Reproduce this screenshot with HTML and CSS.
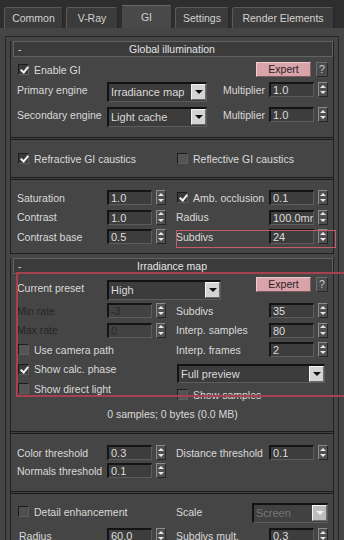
FILE: index.html
```html
<!DOCTYPE html>
<html lang="en">
<head>
    <meta charset="UTF-8" />
    <meta name="viewport" content="width=device-width, initial-scale=1.0" />
    <title>V-Ray - GI</title>
    <link rel="stylesheet" href="styles.css">
</head>
<body>
    <!-- Render setup tabs -->
    <div class="tabs">
        <div class="tab tab-common">Common</div>
        <div class="tab tab-vray">V-Ray</div>
        <div class="tab tab-gi active">GI</div>
        <div class="tab tab-settings">Settings</div>
        <div class="tab tab-elements">Render Elements</div>
    </div>

    <div class="panel">
        <div class="frame">

            <!-- Global illumination rollout -->
            <div class="rollout">
                <div class="roll-head"><span class="minus">-</span><span class="roll-title">Global illumination</span></div>
                <div class="roll-body">
                    <div class="sect sect-engine">
                        <div class="row">
                            <span class="chk on"></span>Enable GI
                            <div class="cell-r end">
                                <span class="btn-expert">Expert</span><span class="btn-q">?</span>
                            </div>
                        </div>
                        <div class="row row-primary">
                            <span class="lbl">Primary engine</span>
                            <div class="combo w-engine"><span class="combo-text">Irradiance map</span><span class="combo-btn"></span></div>
                            <div class="cell-r end">
                                <span class="lbl-s">Multiplier</span><span class="field">1.0</span><span class="spin"></span>
                            </div>
                        </div>
                        <div class="row row-secondary">
                            <span class="lbl">Secondary engine</span>
                            <div class="combo w-engine"><span class="combo-text">Light cache</span><span class="combo-btn"></span></div>
                            <div class="cell-r end">
                                <span class="lbl-s">Multiplier</span><span class="field">1.0</span><span class="spin"></span>
                            </div>
                        </div>
                    </div>
                    <div class="sep"></div>

                    <div class="sect sect-caustics">
                        <div class="row">
                            <span class="chk on"></span>Refractive GI caustics
                            <div class="cell-r">
                                <span class="chk"></span>Reflective GI caustics
                            </div>
                        </div>
                    </div>
                    <div class="sep"></div>

                    <div class="sect sect-color">
                        <div class="row">
                            <span class="lbl">Saturation</span><span class="field">1.0</span><span class="spin"></span>
                            <div class="cell-r">
                                <span class="lbl"><span class="chk on"></span>Amb. occlusion</span><span class="field">0.1</span><span class="spin"></span>
                            </div>
                        </div>
                        <div class="row">
                            <span class="lbl">Contrast</span><span class="field">1.0</span><span class="spin"></span>
                            <div class="cell-r">
                                <span class="lbl">Radius</span><span class="field">100.0mm</span><span class="spin"></span>
                            </div>
                        </div>
                        <div class="row">
                            <span class="lbl">Contrast base</span><span class="field">0.5</span><span class="spin"></span>
                            <div class="cell-r mark-sub">
                                <span class="lbl">Subdivs</span><span class="field">24</span><span class="spin"></span>
                            </div>
                        </div>
                    </div>
                </div>
            </div>

            <!-- Irradiance map rollout -->
            <div class="rollout">
                <div class="roll-head"><span class="minus">-</span><span class="roll-title">Irradiance map</span></div>
                <div class="roll-body">
                    <div class="sect sect-irr">
                        <div class="mark-irr"></div>
                        <div class="row">
                            <span class="lbl">Current preset</span>
                            <div class="combo w-preset"><span class="combo-text">High</span><span class="combo-btn"></span></div>
                            <div class="cell-r end raise">
                                <span class="btn-expert">Expert</span><span class="btn-q">?</span>
                            </div>
                        </div>
                        <div class="row row-min">
                            <span class="lbl dim">Min rate</span><span class="field dim">-3</span><span class="spin"></span>
                            <div class="cell-r">
                                <span class="lbl">Subdivs</span><span class="field">35</span><span class="spin"></span>
                            </div>
                        </div>
                        <div class="row">
                            <span class="lbl dim">Max rate</span><span class="field dim">0</span><span class="spin"></span>
                            <div class="cell-r">
                                <span class="lbl">Interp. samples</span><span class="field">80</span><span class="spin"></span>
                            </div>
                        </div>
                        <div class="row">
                            <span class="chk"></span>Use camera path
                            <div class="cell-r">
                                <span class="lbl">Interp. frames</span><span class="field">2</span><span class="spin"></span>
                            </div>
                        </div>
                        <div class="row">
                            <span class="chk on"></span>Show calc. phase
                            <div class="cell-r">
                                <div class="combo w-preview"><span class="combo-text">Full preview</span><span class="combo-btn"></span></div>
                            </div>
                        </div>
                        <div class="row">
                            <span class="chk"></span>Show direct light
                            <div class="cell-r lower">
                                <span class="chk"></span>Show samples
                            </div>
                        </div>
                        <div class="row row-info">0 samples; 0 bytes (0.0 MB)</div>
                    </div>
                    <div class="sep"></div>

                    <div class="sect sect-thresh">
                        <div class="row">
                            <span class="lbl">Color threshold</span><span class="field">0.3</span><span class="spin"></span>
                            <div class="cell-r">
                                <span class="lbl">Distance threshold</span><span class="field">0.1</span><span class="spin"></span>
                            </div>
                        </div>
                        <div class="row">
                            <span class="lbl">Normals threshold</span><span class="field">0.1</span><span class="spin"></span>
                        </div>
                    </div>
                    <div class="sep"></div>

                    <div class="sect sect-detail">
                        <div class="row">
                            <span class="chk off"></span>Detail enhancement
                            <div class="cell-r">
                                <span class="lbl lbl-scale">Scale</span>
                                <div class="combo w-scale disabled"><span class="combo-text">Screen</span><span class="combo-btn"></span></div>
                            </div>
                        </div>
                        <div class="row">
                            <span class="lbl lbl-radius">Radius</span><span class="field">60.0</span><span class="spin"></span>
                            <div class="cell-r">
                                <span class="lbl">Subdivs mult.</span><span class="field">0.3</span><span class="spin"></span>
                            </div>
                        </div>
                    </div>
                </div>
            </div>

        </div>
    </div>
</body>
</html>
```

FILE: styles.css
```css
/* Base page, dark 3ds Max look */
body {
    margin: 0;
    width: 344px;
    height: 540px;
    overflow: hidden;
    background-color: #454545;
    color: #dadada;
    font-family: "Liberation Sans", Arial, sans-serif;
    font-size: 10.5px;
}

/* Tab strip */
.tabs {
    display: flex;
    align-items: flex-end;
    gap: 3px;
    height: 28px;
    padding-left: 4px;
    background-color: #2e2e2e;
    box-sizing: border-box;
}
.tab {
    height: 21px;
    line-height: 20px;
    text-align: center;
    color: #d2d2d2;
    background-color: #3b3b3b;
    border: 1px solid #5a5a5a;
    border-right-color: #262626;
    border-bottom: none;
    border-radius: 3px 3px 0 0;
    box-sizing: border-box;
}
.tab.active {
    height: 23px;
    line-height: 22px;
    background-color: #494949;
    border-color: #6a6a6a #2a2a2a;
}
.tab-common { width: 59px; }
.tab-vray { width: 52px; }
.tab-gi { width: 51px; }
.tab-settings { width: 54px; }
.tab-elements { width: 102px; }

/* Panel frame under the tabs */
.panel { padding: 8px 0 0 5px; }
.frame {
    width: 334px;
    height: 520px;
    padding: 4px 4px 0 4px;
    border: 1px solid #262626;
    border-bottom: none;
    box-sizing: border-box;
}

/* Rollouts */
.rollout {
    border-left: 1px solid #202020;
    border-right: 1px solid #202020;
    border-bottom: 1px solid #202020;
    margin-bottom: 4px;
}
.roll-head {
    display: flex;
    align-items: center;
    height: 16px;
    margin-left: 2px;
    background-color: #3b3b3b;
    border: 1px solid #616161;
    box-sizing: border-box;
}
.minus { width: 14px; padding-left: 4px; box-sizing: border-box; }
.roll-title { flex: 1; text-align: center; padding-right: 16px; color: #e4e4e4; }
.roll-body { padding: 0 5px 0 6px; }

/* double separator line between groups */
.sep {
    height: 1px;
    margin: 0 -5px 0 -6px;
    border-top: 1px solid #1c1c1c;
    border-bottom: 1px solid #1c1c1c;
    background-color: #404040;
}

/* Rows and cells */
.row {
    display: flex;
    align-items: center;
    height: 15px;
    white-space: nowrap;
}
.lbl {
    display: flex;
    align-items: center;
    width: 90px;
    flex: none;
}
.lbl.dim { color: #262626; }
.lbl-s { margin-right: 4px; }
.lbl-radius { padding-left: 2px; box-sizing: border-box; }
.cell-r {
    display: flex;
    align-items: center;
    width: 152px;
    height: 15px;
    margin-left: auto;
    flex: none;
}
.cell-r .lbl { width: 93px; }
.cell-r .lbl-scale { width: 76px; }
.cell-r.end { justify-content: flex-end; width: auto; }
.cell-r.raise { align-self: flex-start; margin-top: -3px; }
.cell-r.lower { align-self: flex-start; margin-top: 6px; }

/* Checkboxes */
.chk {
    position: relative;
    width: 11px;
    height: 11px;
    margin: 0 5px 0 1px;
    flex: none;
    background-color: #545454;
    border: 1px solid;
    border-color: #1c1c1c #5e5e5e #5e5e5e #1c1c1c;
    box-sizing: border-box;
}
.chk.on { background-color: #3a3a3a; }
.chk.on::after {
    content: "";
    position: absolute;
    left: 3px;
    top: 0px;
    width: 3px;
    height: 6px;
    border: solid #f2f2f2;
    border-width: 0 2px 2px 0;
    transform: rotate(40deg);
}
.chk.off { background-color: #4e4e4e; }

/* Spinner edit fields */
.field {
    width: 45px;
    height: 15px;
    padding-left: 2px;
    flex: none;
    overflow: hidden;
    font-size: 11px;
    line-height: 12px;
    color: #dcdcdc;
    background-color: #3d3d3d;
    border-style: solid;
    border-width: 2px 1px 1px 2px;
    border-color: #141414 #5c5c5c #5c5c5c #141414;
    box-sizing: border-box;
}
.field.dim { color: #282828; background-color: #424242; }
.spin {
    display: flex;
    flex-direction: column;
    align-items: center;
    justify-content: space-around;
    width: 10px;
    height: 15px;
    margin-left: 4px;
    flex: none;
    background-color: #505050;
    border: 1px solid;
    border-color: #8a8a8a #262626 #262626 #8a8a8a;
    box-sizing: border-box;
}
.spin::before,
.spin::after {
    content: "";
    width: 0;
    height: 0;
    border-left: 3px solid transparent;
    border-right: 3px solid transparent;
}
.spin::before { border-bottom: 3px solid #e6e6e6; }
.spin::after { border-top: 3px solid #e6e6e6; }

/* Dropdown lists */
.combo {
    display: flex;
    align-self: flex-start;
    height: 20px;
    flex: none;
    font-size: 11px;
    background-color: #3c3c3c;
    border-style: solid;
    border-width: 2px 1px 1px 2px;
    border-color: #121212 #5c5c5c #5c5c5c #121212;
    box-sizing: border-box;
}
.combo-text { padding: 2px 0 0 2px; flex: 1; }
.combo-btn {
    display: flex;
    align-items: center;
    justify-content: center;
    width: 15px;
    height: 16px;
    background-color: #d4d4d4;
    border: 1px solid;
    border-color: #f4f4f4 #6a6a6a #6a6a6a #f4f4f4;
    box-sizing: border-box;
}
.combo-btn::after {
    content: "";
    border-left: 4px solid transparent;
    border-right: 4px solid transparent;
    border-top: 4px solid #101010;
}
.w-engine { width: 100px; }
.w-preset { width: 114px; }
.w-preview { width: 148px; margin-left: 1px; margin-top: 2px; height: 19px; }
.w-scale { width: 76px; margin-top: -1px; }
.combo.disabled { color: #767676; background-color: #414141; }
.combo.disabled .combo-btn { background-color: #bdbdbd; }
.combo.disabled .combo-btn::after { border-top-color: #f0f0f0; }

/* Buttons */
.btn-expert {
    width: 55px;
    height: 15px;
    line-height: 13px;
    text-align: center;
    color: #2a2222;
    background-color: #d9a3aa;
    border: 1px solid;
    border-color: #f1c9ce #7c5b60 #7c5b60 #f1c9ce;
    box-sizing: border-box;
}
.btn-q {
    width: 12px;
    height: 15px;
    margin-left: 5px;
    line-height: 13px;
    text-align: center;
    color: #cfcfcf;
    background-color: #4b4b4b;
    border: 1px solid;
    border-color: #6c6c6c #2a2a2a #2a2a2a #6c6c6c;
    box-sizing: border-box;
}

/* Section spacing */
.sect-engine { padding: 5px 0 15px; }
.row-primary { margin-top: 5px; }
.row-secondary { margin-top: 10px; }
.sect-caustics { padding: 11px 0; }
.sect-color { display: flex; flex-direction: column; gap: 4.5px; padding: 10px 0 9px; }

.sect-irr { position: relative; display: flex; flex-direction: column; gap: 4.5px; padding: 6px 0 10px; }
.sect-irr .row-min { margin-top: 3.5px; }
.row-info { justify-content: center; margin-top: 5.5px; }
.sect-thresh { display: flex; flex-direction: column; gap: 3px; padding: 11px 0 13px; }
.sect-detail { display: flex; flex-direction: column; gap: 9px; padding: 10px 0 0; }

/* Red annotation marks drawn over the panel */
.mark-sub { position: relative; }
.mark-sub::after {
    content: "";
    position: absolute;
    left: 0;
    right: -8px;
    top: 1px;
    bottom: -4px;
    border: 1px solid #c25c6a;
}
.mark-irr {
    position: absolute;
    left: -1px;
    right: -40px;
    top: -2px;
    height: 125px;
    border: 2px solid #a9404f;
    box-sizing: border-box;
    z-index: 2;
    pointer-events: none;
}
```
